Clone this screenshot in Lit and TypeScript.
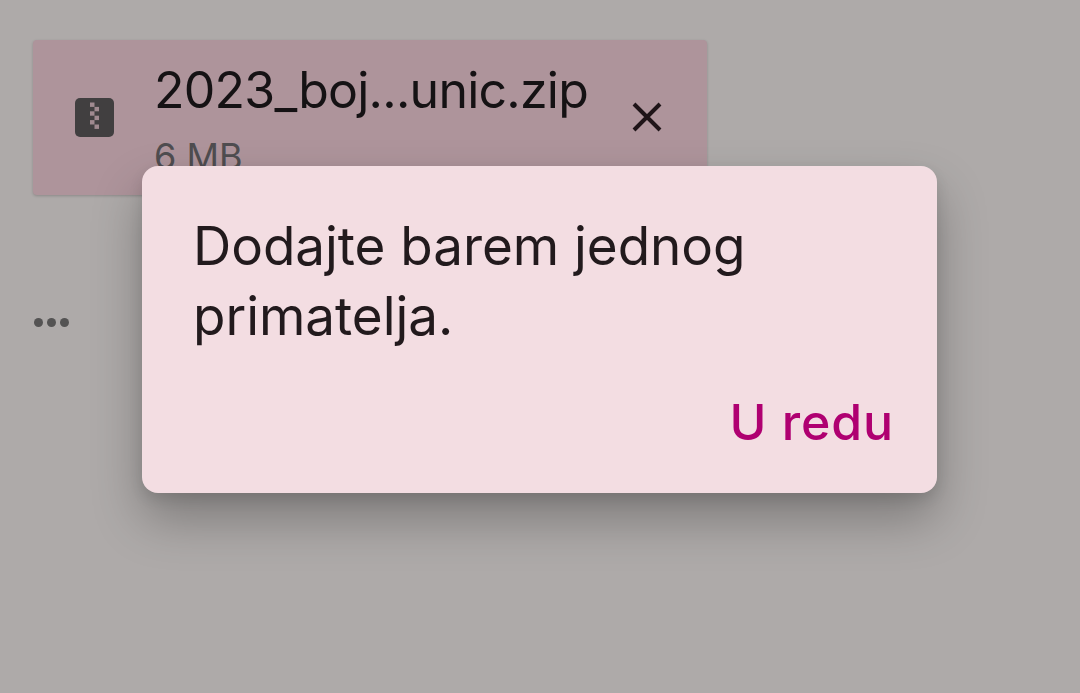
import { LitElement, html, css } from "lit";
import { customElement } from "lit/decorators.js";

@customElement("app-root")
export class AppRoot extends LitElement {
  static styles = css`
    :host {
      display: block;
      position: relative;
      width: 1080px;
      height: 693px;
      overflow: hidden;
      background: #aeaaa9;
      font-family: "Inter", "Roboto", sans-serif;
    }
    .page {
      display: flex;
      flex-direction: column;
      align-items: flex-start;
      padding: 40px 0 0 33px;
    }
    .chip {
      box-sizing: border-box;
      width: 674px;
      height: 155px;
      background: #ae949b;
      border-radius: 4px;
      box-shadow: 0 1px 3px rgba(0, 0, 0, 0.2);
      display: flex;
      overflow: hidden;
      padding: 0 43px 0 42px;
    }
    .zip {
      flex: none;
      width: 39px;
      height: 39px;
      margin: 58px 40px 0 0;
    }
    .text {
      flex: 1;
      min-width: 0;
      padding-top: 19px;
    }
    .name {
      font-size: 50px;
      line-height: 62px;
      color: #151214;
      letter-spacing: -0.75px;
      white-space: nowrap;
    }
    .size {
      font-size: 36px;
      line-height: 44px;
      margin-top: 13px;
      color: #4f4d50;
    }
    .close {
      flex: none;
      width: 34px;
      height: 34px;
      margin-top: 60px;
    }
    .dots {
      display: flex;
      gap: 4px;
      margin: 123px 0 0 1px;
    }
    .dots span {
      width: 9px;
      height: 9px;
      border-radius: 50%;
      background: #545353;
    }
    .dialog {
      position: absolute;
      left: 142px;
      top: 166px;
      width: 795px;
      height: 327px;
      box-sizing: border-box;
      padding: 45px 43px 0 51px;
      background: #f3dde2;
      border-radius: 16px;
      box-shadow: 0 26px 50px rgba(0, 0, 0, 0.28), 0 6px 14px rgba(0, 0, 0, 0.1);
      display: flex;
      flex-direction: column;
    }
    .msg {
      font-size: 53px;
      line-height: 70px;
      color: #221a1d;
      letter-spacing: -0.05px;
    }
    .actions {
      display: flex;
      justify-content: flex-end;
      margin-top: 39px;
    }
    .ok {
      font-size: 50px;
      line-height: 64px;
      font-weight: 500;
      letter-spacing: 0.9px;
      color: #af0071;
    }
  `;

  render() {
    return html`
      <div class="page">
        <div class="chip">
          <svg class="zip" viewBox="0 0 39 39">
            <rect width="39" height="39" rx="5" fill="#413f40" />
            <g fill="#a08a90">
              <rect x="15" y="4.5" width="4.5" height="4.4" />
              <rect x="19.5" y="8.9" width="4.5" height="4.4" />
              <rect x="15" y="13.3" width="4.5" height="4.4" />
              <rect x="19.5" y="17.7" width="4.5" height="4.4" />
              <rect x="15" y="22.1" width="4.5" height="4.4" />
              <rect x="19.5" y="26.5" width="4.5" height="4.4" />
            </g>
          </svg>
          <div class="text">
            <div class="name">2023_boj...unic.zip</div>
            <div class="size">6 MB</div>
          </div>
          <svg class="close" viewBox="0 0 34 34">
            <path d="M4 4 L30 30 M30 4 L4 30" stroke="#1f1418" stroke-width="4" fill="none" />
          </svg>
        </div>
        <div class="dots"><span></span><span></span><span></span></div>
      </div>
      <div class="dialog">
        <div class="msg">Dodajte barem jednog<br />primatelja.</div>
        <div class="actions"><div class="ok">U redu</div></div>
      </div>
    `;
  }
}
